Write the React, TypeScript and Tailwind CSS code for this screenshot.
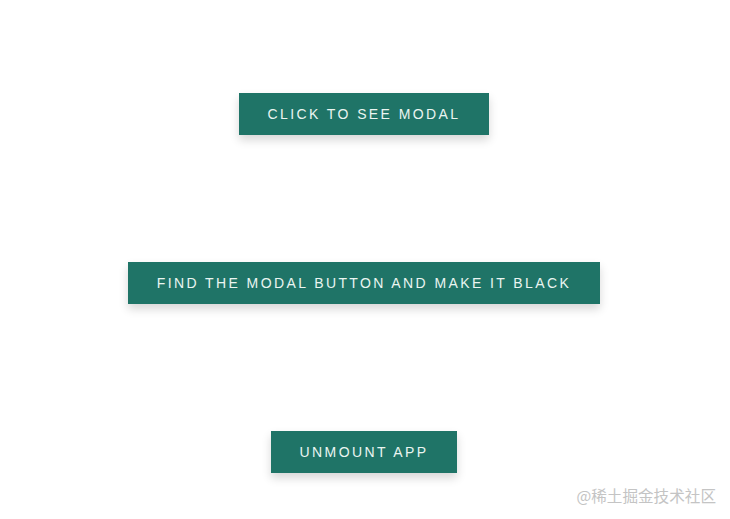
const buttons = [
  "Click to see modal",
  "Find the modal button and make it black",
  "Unmount App",
];

export default function App() {
  return (
    <div className="relative h-[519px] w-full overflow-hidden bg-white font-['Liberation_Sans',Arial,sans-serif]">
      <div className="flex flex-col items-center gap-[127px] pt-[93px] pr-[2px]">
        {buttons.map((label) => (
          <button
            key={label}
            className="h-[42px] bg-[#1f7467] px-[29px] text-[14px] uppercase tracking-[2.4px] text-[#eaf5f1] shadow-[0_5px_9px_rgba(0,0,0,0.16)]"
          >
            {label}
          </button>
        ))}
      </div>

      {/* watermark */}
      <span className="absolute bottom-[15px] right-[14px] font-['Noto_Sans_CJK_SC',sans-serif] text-[15.6px] leading-none text-[#c4c4c4]">
        @稀土掘金技术社区
      </span>
    </div>
  );
}
